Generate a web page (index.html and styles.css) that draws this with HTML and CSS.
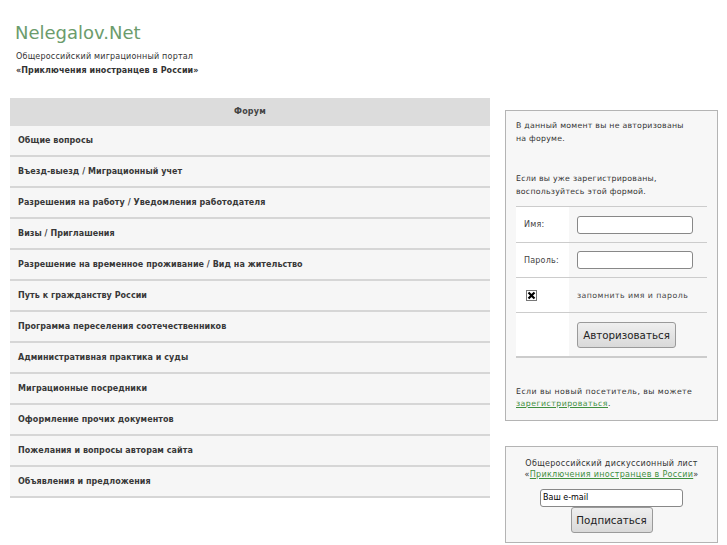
FILE: index.html
```html
<!DOCTYPE html>
<html lang="ru">
<head>
<meta charset="utf-8">
<title>Nelegalov.Net</title>
<link rel="stylesheet" href="styles.css">
</head>
<body>
<header class="site">
  <h1 class="logo">Nelegalov.Net</h1>
  <p class="tagline">Общероссийский миграционный портал<br><b>«Приключения иностранцев в России»</b></p>
</header>
<div class="layout">
  <main class="forum">
    <div class="forum-head">Форум</div>
    <ul class="forum-list">
      <li>Общие вопросы</li>
      <li>Въезд-выезд / Миграционный учет</li>
      <li>Разрешения на работу / Уведомления работодателя</li>
      <li>Визы / Приглашения</li>
      <li>Разрешение на временное проживание / Вид на жительство</li>
      <li>Путь к гражданству России</li>
      <li>Программа переселения соотечественников</li>
      <li>Административная практика и суды</li>
      <li>Миграционные посредники</li>
      <li>Оформление прочих документов</li>
      <li>Пожелания и вопросы авторам сайта</li>
      <li>Объявления и предложения</li>
    </ul>
  </main>
  <aside class="sidebar">
    <div class="box login">
      <p class="note">В данный момент вы не авторизованы<br>на форуме.</p>
      <p class="note second">Если вы уже зарегистрированы,<br>воспользуйтесь этой формой.</p>
      <div class="form">
        <div class="frow first"><div class="lab">Имя:</div><div class="fld"><span class="input"></span></div></div>
        <div class="frow"><div class="lab">Пароль:</div><div class="fld"><span class="input"></span></div></div>
        <div class="frow"><div class="lab"><span class="check"><svg width="9" height="9" viewBox="0 0 9 9"><path d="M1.5 1.5L7.5 7.5M7.5 1.5L1.5 7.5" stroke="#000" stroke-width="2.2"/></svg></span></div><div class="fld remember">запомнить имя и пароль</div></div>
        <div class="frow last"><div class="lab"></div><div class="fld"><span class="btn">Авторизоваться</span></div></div>
      </div>
      <p class="note newbie">Если вы новый посетитель, вы можете<br><a href="#">зарегистрироваться</a>.</p>
    </div>
    <div class="box subscribe">
      <p class="sub-text">Общероссийский дискуссионный лист<br>«<a href="#">Приключения иностранцев в России</a>»</p>
      <span class="email">Ваш e-mail</span>
      <span class="btn sub-btn">Подписаться</span>
    </div>
  </aside>
</div>
</body>
</html>
```
FILE: styles.css
```css
html, body {
  margin: 0;
  padding: 0;
  background: #fff;
}
body {
  font-family: "DejaVu Sans", Verdana, sans-serif;
  color: #333;
  width: 727px;
}
.site {
  padding: 22px 0 0 15px;
}
.logo {
  margin: 0;
  font-size: 18px;
  font-weight: normal;
  line-height: 21px;
  color: #6c9c6c;
}
.tagline {
  margin: 7px 0 0 1px;
  font-size: 8px;
  line-height: 14px;
  letter-spacing: 0.2px;
  color: #333;
}
.tagline b {
  letter-spacing: 0.1px;
}
.layout {
  display: flex;
  align-items: flex-start;
  margin-top: 20px;
  padding-left: 10px;
  gap: 15px;
}
.forum {
  width: 480px;
}
.forum-head {
  height: 28px;
  line-height: 28px;
  background: #dcdcdc;
  text-align: center;
  font-size: 8px;
  font-weight: bold;
  letter-spacing: 0.2px;
  color: #444;
}
.forum-list {
  list-style: none;
  margin: 0;
  padding: 0;
}
.forum-list li {
  height: 29px;
  line-height: 29px;
  padding-left: 8px;
  background: #f6f6f6;
  border-bottom: 2px solid #d6d6d6;
  font-size: 8px;
  font-weight: bold;
  letter-spacing: 0.05px;
  color: #383838;
}
.sidebar {
  width: 213px;
  padding-top: 12px;
}
.box {
  border: 1px solid #b4b4b4;
  background: #f7f7f7;
}
.login {
  padding: 8px 10px 10px 10px;
}
.note {
  margin: 0;
  font-size: 7.8px;
  line-height: 13px;
  letter-spacing: 0.25px;
  color: #333;
}
.note.second {
  margin-top: 27px;
}
.form {
  margin-top: 8px;
  border-top: 1px solid #ccc;
  border-bottom: 2px solid #ccc;
}
.frow {
  display: flex;
  height: 34px;
  border-bottom: 1px solid #ccc;
}
.frow.first {
  height: 35px;
}
.frow.last {
  height: 43px;
  border-bottom: 0;
}
.lab {
  width: 45px;
  padding-left: 8px;
  background: #fff;
  display: flex;
  align-items: center;
  font-size: 8px;
  letter-spacing: 0.2px;
  color: #444;
}
.fld {
  flex: 1;
  padding-left: 8px;
  display: flex;
  align-items: center;
}
.remember {
  font-size: 7.8px;
  letter-spacing: 0.45px;
  color: #444;
}
.input {
  display: block;
  width: 114px;
  height: 16px;
  border: 1px solid #888;
  border-radius: 3px;
  background: #fff;
}
.check {
  display: flex;
  align-items: center;
  justify-content: center;
  width: 9px;
  height: 9px;
  margin-left: 2px;
  border: 1px solid #777;
  background: #fff;
}
.btn {
  display: inline-block;
  box-sizing: border-box;
  height: 26px;
  line-height: 24px;
  border: 1px solid #9a9a9a;
  border-radius: 3px;
  background: linear-gradient(#efefef, #d9d9d9);
  font-size: 10.3px;
  text-align: center;
  color: #222;
}
.login .btn {
  width: 99px;
  margin-top: 1px;
}
.newbie {
  margin-top: 28px;
  line-height: 12px;
  letter-spacing: 0.45px;
}
a {
  color: #3f8f3f;
  text-decoration: underline;
}
.subscribe {
  margin-top: 25px;
  height: 95px;
  display: flex;
  flex-direction: column;
  align-items: center;
}
.sub-text {
  margin: 11px 0 0 0;
  text-align: center;
  font-size: 8px;
  line-height: 11px;
  letter-spacing: 0.3px;
  color: #333;
}
.email {
  display: block;
  box-sizing: border-box;
  margin-top: 9px;
  width: 143px;
  height: 18px;
  line-height: 16px;
  padding-left: 2px;
  border: 1px solid #888;
  border-radius: 3px;
  background: #fff;
  font-size: 8px;
  color: #000;
}
.sub-btn {
  width: 82px;
  height: 26px;
}
```
